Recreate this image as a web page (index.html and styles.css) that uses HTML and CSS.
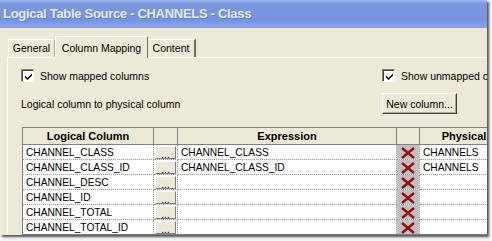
FILE: index.html
```html
<html>
<head><title>Logical Table Source - CHANNELS - Class</title>
<link rel="stylesheet" href="styles.css">
</head>
<body>
<div class="window">
	<div class="titlebar">Logical Table Source - CHANNELS - Class</div>
	<div class="client">
		<div class="tabs">
			<div class="tab first">General</div>
			<div class="tab selected">Column Mapping</div>
			<div class="tab last">Content</div>
		</div>
		<div class="panel">
			<div class="options">
				<label class="check"><span class="box"><svg width="9" height="9" viewBox="0 0 9 9"><path d="M1 3.5 L3.5 6 L8 1.5 L8 3.5 L3.5 8 L1 5.5 Z" fill="#000"/></svg></span>Show mapped columns</label>
				<label class="check"><span class="box"><svg width="9" height="9" viewBox="0 0 9 9"><path d="M1 3.5 L3.5 6 L8 1.5 L8 3.5 L3.5 8 L1 5.5 Z" fill="#000"/></svg></span>Show unmapped columns</label>
				<div class="caption">Logical column to physical column</div>
				<div><button class="btn">New column...</button></div>
			</div>
			<table class="grid">
				<colgroup>
					<col class="c-logical"><col class="c-more"><col class="c-expr"><col class="c-del"><col class="c-phys">
				</colgroup>
				<tr class="head">
					<th>Logical Column</th><th></th><th>Expression</th><th></th><th>Physical</th>
				</tr>
				<tr><td>CHANNEL_CLASS</td><td class="more"><span class="dots">...</span></td><td>CHANNEL_CLASS</td><td class="del"><svg width="16" height="12" viewBox="0 0 16 12"><path d="M2 1 L14 11 M14 1 L2 11" stroke="#980808" stroke-width="2.3"/></svg></td><td>CHANNELS</td></tr>
				<tr><td>CHANNEL_CLASS_ID</td><td class="more"><span class="dots">...</span></td><td>CHANNEL_CLASS_ID</td><td class="del"><svg width="16" height="12" viewBox="0 0 16 12"><path d="M2 1 L14 11 M14 1 L2 11" stroke="#980808" stroke-width="2.3"/></svg></td><td>CHANNELS</td></tr>
				<tr><td>CHANNEL_DESC</td><td class="more"><span class="dots">...</span></td><td></td><td class="del"><svg width="16" height="12" viewBox="0 0 16 12"><path d="M2 1 L14 11 M14 1 L2 11" stroke="#980808" stroke-width="2.3"/></svg></td><td></td></tr>
				<tr><td>CHANNEL_ID</td><td class="more"><span class="dots">...</span></td><td></td><td class="del"><svg width="16" height="12" viewBox="0 0 16 12"><path d="M2 1 L14 11 M14 1 L2 11" stroke="#980808" stroke-width="2.3"/></svg></td><td></td></tr>
				<tr><td>CHANNEL_TOTAL</td><td class="more"><span class="dots">...</span></td><td></td><td class="del"><svg width="16" height="12" viewBox="0 0 16 12"><path d="M2 1 L14 11 M14 1 L2 11" stroke="#980808" stroke-width="2.3"/></svg></td><td></td></tr>
				<tr><td>CHANNEL_TOTAL_ID</td><td class="more"><span class="dots">...</span></td><td></td><td class="del"><svg width="16" height="12" viewBox="0 0 16 12"><path d="M2 1 L14 11 M14 1 L2 11" stroke="#980808" stroke-width="2.3"/></svg></td><td></td></tr>
			</table>
		</div>
	</div>
</div>
</body>
</html>
```
FILE: styles.css
```css
body {
	margin:0px;
	background:#f4f4f4;
	font-family:"Liberation Sans", Arial, sans-serif;
	font-size:10.5px;
	color:#000;
}

.window {
	width:487px;
	height:235px;
	overflow:hidden;
	background:#ece9d8;
	box-shadow:2px 2px 2px #555;
	display:flex;
	flex-direction:column;
}

.titlebar {
	height:28px;
	flex:none;
	box-sizing:border-box;
	padding:6px 0 0 3px;
	background:linear-gradient(#a9bff2 0px, #86a2e6 2px, #7a96df 5px, #7793de 20px, #84a4ec 26px, #7f9ee6 28px);
	color:#e4ecfb;
	font-weight:bold;
	font-size:13px;
	letter-spacing:-0.3px;
	white-space:nowrap;
	text-shadow:1px 1px 0px #6880c8;
}

.client {
	padding:8px 0 0 7px;
	flex:1;
}

.tabs {
	display:flex;
	align-items:flex-end;
	height:21px;
	padding-left:1px;
}

.tab {
	height:18px;
	box-sizing:border-box;
	padding-top:2px;
	text-align:center;
	border-top:1px solid #fff;
	border-left:1px solid #fff;
	border-right:1px solid #aca899;
	white-space:nowrap;
	font-size:10.5px;
}
.tab.first { width:47px; }
.tab.selected {
	height:22px;
	width:93px;
	padding-top:5px;
	margin-bottom:-1px;
	background:#ece9d8;
	position:relative;
	border-right:1px solid #716f64;
}
.tab.last {
	width:48px;
	border-left:none;
	border-right:2px solid #716f64;
}

.panel {
	border-top:1px solid #fff;
	border-left:1px solid #fff;
	padding:11px 0 0 13px;
}

.options {
	display:grid;
	grid-template-columns:361px 200px;
	grid-template-rows:13px 21px;
	row-gap:11px;
	align-items:center;
	white-space:nowrap;
}

.check {
	display:flex;
	align-items:center;
	gap:6px;
	height:13px;
}
.box {
	width:13px;
	height:13px;
	box-sizing:border-box;
	border:1px solid;
	border-color:#808080 #fff #fff #808080;
	box-shadow:inset 1px 1px 0 #404040;
	background:#fff;
	display:flex;
	align-items:center;
	justify-content:center;
	padding:1px 0 0 1px;
}

.btn {
	width:75px;
	height:21px;
	padding:0;
	font-family:"Liberation Sans", Arial, sans-serif;
	font-size:10.5px;
	background:#ece9d8;
	border:1px solid;
	border-color:#fff #404040 #404040 #fff;
	box-shadow:inset -1px -1px 0 #aca899;
	color:#000;
}

.grid {
	margin-top:13px;
	margin-left:1px;
	border-collapse:collapse;
	table-layout:fixed;
	width:486px;
	border:1px solid #808080;
	box-shadow:inset 1px 1px 0 #404040;
	font-family:"Liberation Sans", Arial, sans-serif;
	font-size:10.2px;
}
.c-logical { width:131px; }
.c-more { width:24px; }
.c-expr { width:219px; }
.c-del { width:23px; }
.c-phys { width:89px; }

.grid th {
	height:17px;
	padding:0;
	font-weight:bold;
	font-size:11px;
	text-align:center;
	background:#ece9d8;
	border:1px solid #808080;
	border-top:none;
	white-space:nowrap;
}
.grid td {
	height:14px;
	padding:0 0 0 3px;
	background:#fff;
	border:1px dotted #a0a0a0;
	white-space:nowrap;
	overflow:hidden;
	line-height:13px;
}
.grid td.more {
	padding:1px 0 0 1px;
	vertical-align:top;
}
.dots {
	display:block;
	width:21px;
	height:13px;
	box-sizing:border-box;
	background:#ece9d8;
	border:1px solid;
	border-color:#fff #808080 #808080 #fff;
	text-align:center;
	line-height:15px;
	font-size:10px;
}
.grid td.del {
	padding:0;
	background:#c0c0c0;
	text-align:center;
	vertical-align:middle;
}
.grid td.del svg {
	display:block;
	margin:1px auto 0 auto;
}
```
